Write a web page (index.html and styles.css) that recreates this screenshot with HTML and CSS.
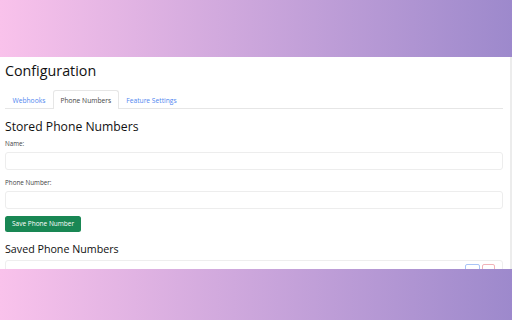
FILE: index.html
```html
<!DOCTYPE html>
<html>
<head>
<meta charset="utf-8">
<link rel="stylesheet" href="styles.css">
</head>
<body>
<div class="panel">
  <div class="content">
    <h1 class="title">Configuration</h1>
    <ul class="tabs">
      <li class="tab">Webhooks</li>
      <li class="tab active">Phone Numbers</li>
      <li class="tab">Feature Settings</li>
    </ul>
    <h2 class="section">Stored Phone Numbers</h2>
    <label class="label">Name:</label>
    <div class="input"></div>
    <label class="label">Phone Number:</label>
    <div class="input"></div>
    <button class="btn">Save Phone Number</button>
    <h3 class="subsection">Saved Phone Numbers</h3>
    <div class="card">
      <div class="row">
        <span class="mini blue"></span>
        <span class="mini red"></span>
      </div>
    </div>
  </div>
  <div class="scroll"></div>
</div>
</body>
</html>
```
FILE: styles.css
```css
html, body {
  margin: 0;
  padding: 0;
}
body {
  width: 512px;
  height: 320px;
  overflow: hidden;
  background: linear-gradient(to right, #f9c2eb, #9d89cc);
  font-family: "Open Sans", "Noto Sans", sans-serif;
}
.panel {
  margin-top: 57px;
  height: 212px;
  background: #fff;
  display: flex;
  overflow: hidden;
}
.content {
  flex: 1;
  padding: 0 5px;
  display: flex;
  flex-direction: column;
}
.content > * {
  flex-shrink: 0;
}
.scroll {
  width: 2px;
  background: #ececec;
}
.title {
  margin: 4px 0 0;
  font-size: 14.3px;
  font-weight: 400;
  line-height: 20px;
  color: #111;
}
.tabs {
  list-style: none;
  margin: 9px 2px 0 0;
  padding: 0;
  display: flex;
  border-bottom: 1px solid #e6e6e6;
}
.tab {
  font-size: 6.7px;
  color: #4f86f0;
  padding: 0 6.5px;
  height: 17px;
  line-height: 19px;
  border: 1px solid transparent;
  border-bottom: none;
  border-radius: 3px 3px 0 0;
}
.tab.active {
  color: #444;
  border-color: #e6e6e6;
  background: #fff;
  margin-bottom: -1px;
  height: 18px;
}
.section {
  margin: 10px 0 0;
  font-size: 12.2px;
  font-weight: 400;
  line-height: 16px;
  color: #111;
}
.label {
  font-size: 6.3px;
  color: #444;
  line-height: 9px;
  margin-top: 4px;
}
.input {
  height: 16px;
  border: 1px solid #ededed;
  border-radius: 3px;
  margin: 4px 2px 0 0;
}
.input + .label {
  margin-top: 8px;
}
.btn {
  align-self: flex-start;
  margin-top: 7px;
  height: 16px;
  padding: 0 7px;
  border: none;
  border-radius: 2.5px;
  background: #198754;
  color: #fff;
  font-family: inherit;
  font-size: 6.5px;
  line-height: 16px;
}
.subsection {
  margin: 10px 0 0;
  font-size: 10.7px;
  font-weight: 400;
  line-height: 14px;
  color: #111;
}
.card {
  margin: 4px 2px 0 0;
  height: 30px;
  border: 1px solid #eeeeee;
  border-radius: 3px;
}
.row {
  display: flex;
  justify-content: flex-end;
  gap: 2px;
  padding: 3px 7px 0 0;
}
.mini {
  height: 12px;
  border-radius: 2px;
  border: 1px solid;
}
.mini.blue { width: 13px; border-color: #a9c4f7; }
.mini.red { width: 11px; border-color: #f2b3b8; }
```
